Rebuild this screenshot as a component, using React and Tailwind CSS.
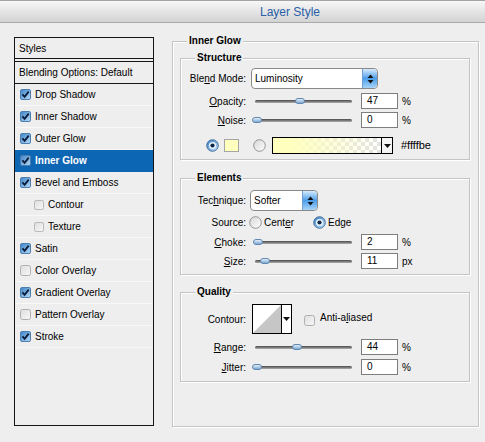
import React from "react";

function CheckBox({ checked, small }) {
  const s = small ? 10 : 11;
  if (checked) {
    return (
      <svg width={s} height={s} viewBox="0 0 11 11" className="shrink-0">
        <defs>
          <linearGradient id="cbOn" x1="0" y1="0" x2="1" y2="1">
            <stop offset="0" stopColor="#3a82c8" />
            <stop offset="1" stopColor="#b9dcf7" />
          </linearGradient>
        </defs>
        <rect x="0.5" y="0.5" width="10" height="10" rx="1.5" fill="url(#cbOn)" stroke="#4d7fae" />
        <path d="M2.4 5.3 L4.6 7.8 L8.7 2.6" stroke="#0b1f3d" strokeWidth="1.9" fill="none" />
      </svg>
    );
  }
  return (
    <svg width={s} height={s} viewBox="0 0 11 11" className="shrink-0">
      <defs>
        <linearGradient id="cbOff" x1="0" y1="0" x2="1" y2="1">
          <stop offset="0" stopColor="#dedede" />
          <stop offset="1" stopColor="#f8f8f8" />
        </linearGradient>
      </defs>
      <rect x="0.5" y="0.5" width="10" height="10" rx="2" fill="url(#cbOff)" stroke="#b0b0b0" />
    </svg>
  );
}

function Radio({ on }) {
  return (
    <svg width="13" height="13" viewBox="0 0 13 13" className="shrink-0">
      <defs>
        <linearGradient id="rOn" x1="0" y1="0" x2="1" y2="1">
          <stop offset="0" stopColor="#2f78c2" />
          <stop offset="1" stopColor="#c7e3fa" />
        </linearGradient>
        <linearGradient id="rOff" x1="0" y1="0" x2="1" y2="1">
          <stop offset="0" stopColor="#d6d6d6" />
          <stop offset="1" stopColor="#ffffff" />
        </linearGradient>
      </defs>
      {on ? (
        <>
          <circle cx="6.5" cy="6.5" r="5.8" fill="url(#rOn)" stroke="#3d6a98" strokeWidth="0.9" />
          <circle cx="6.5" cy="6.5" r="3.6" fill="#e9f4fd" />
          <circle cx="6.5" cy="6.5" r="2.1" fill="#0c2748" />
        </>
      ) : (
        <circle cx="6.5" cy="6.5" r="5.8" fill="url(#rOff)" stroke="#8a8a8a" strokeWidth="0.9" />
      )}
    </svg>
  );
}

function Slider({ center }) {
  return (
    <div className="relative w-[97px] h-[8px] flex items-center shrink-0">
      <div className="w-full h-[3px] rounded-full bg-gradient-to-b from-[#4a4a4a] via-[#7a7a7a] to-[#b0b0b0]" />
      <div
        className="absolute top-[1px] w-[10px] h-[6px] rounded-full border border-[#5f87b0] bg-gradient-to-b from-[#e3effa] to-[#7ea9d3]"
        style={{ left: center - 255 - 5 }}
      />
    </div>
  );
}

function NumBox({ v }) {
  return (
    <div className="w-[37px] h-[16px] bg-white border border-[#7d7d7d] pl-[5px] flex items-center shrink-0 leading-none">
      {v}
    </div>
  );
}

function AquaButton() {
  return (
    <div className="w-[15px] self-stretch rounded-r-[4px] bg-gradient-to-b from-[#d4eafc] via-[#4a9de9] to-[#a6d4f9] border-l border-[#6c9fcf] flex items-center justify-center">
      <svg width="7" height="10" viewBox="0 0 7 10">
        <path d="M3.5 0.5 L6.5 4 L0.5 4 Z" fill="#111" />
        <path d="M3.5 9.5 L6.5 6 L0.5 6 Z" fill="#111" />
      </svg>
    </div>
  );
}

function SmallArrow() {
  return (
    <svg width="7" height="4" viewBox="0 0 7 4">
      <path d="M0 0 L7 0 L3.5 4 Z" fill="#111" />
    </svg>
  );
}

function Group({ title, className, children }) {
  return (
    <div
      className={
        "relative border border-[#c4c4c4] shadow-[inset_1px_1px_0_#ffffff,1px_1px_0_#ffffff] " +
        (className || "")
      }
    >
      <span className="absolute -top-[7px] left-[14px] px-[2px] bg-[#eeeeee] font-bold leading-[12px]">
        {title}
      </span>
      {children}
    </div>
  );
}

function Label({ children, w = "w-[65px]" }) {
  return <div className={w + " text-right shrink-0 whitespace-nowrap"}>{children}</div>;
}

function SliderRow({ label, center, value, unit, className }) {
  return (
    <div className={"flex items-center h-[16px] " + (className || "")}>
      <Label>{label}</Label>
      <div className="ml-[9px]">
        <Slider center={center} />
      </div>
      <div className="ml-[9px]">
        <NumBox v={value} />
      </div>
      <div className="ml-[4px]">{unit}</div>
    </div>
  );
}

const items = [
  { t: "Drop Shadow", c: true },
  { t: "Inner Shadow", c: true },
  { t: "Outer Glow", c: true },
  { t: "Inner Glow", c: true, sel: true },
  { t: "Bevel and Emboss", c: true },
  { t: "Contour", c: false, indent: true },
  { t: "Texture", c: false, indent: true },
  { t: "Satin", c: true },
  { t: "Color Overlay", c: false },
  { t: "Gradient Overlay", c: true },
  { t: "Pattern Overlay", c: false },
  { t: "Stroke", c: true },
];

export default function App() {
  return (
    <div className="w-[485px] h-[442px] overflow-hidden bg-[#eeeeee] text-[10px] text-black font-['Liberation_Sans',Arial,sans-serif]">
      {/* Title bar */}
      <div className="h-[23px] border-t border-[#a3a3a3] border-b border-b-[#a9a9a9] bg-gradient-to-b from-[#f7f7f7] to-[#d3d3d3] flex items-center justify-center pl-[95px]">
        <span className="text-[12px] text-[#2a5ea8]">Layer Style</span>
      </div>

      <div className="flex pt-[14px] pl-[14px]">
        {/* Left list */}
        <div className="w-[140px] h-[389px] border border-[#151515] flex flex-col shrink-0">
          <div className="h-[21px] border-b border-[#151515] flex items-center pl-[4px]">Styles</div>
          <div className="h-[2px]" />
          <div className="h-[23px] border-t border-b border-[#151515] flex items-center pl-[4px]">
            Blending Options: Default
          </div>
          {items.map((it) => (
            <div
              key={it.t}
              className={
                "h-[22px] border-b flex items-center gap-[4px] " +
                (it.indent ? "pl-[19px] " : "pl-[5px] ") +
                (it.sel ? "bg-[#0d66b3] border-[#0d66b3] text-white font-bold" : "border-[#f8f8f8]")
              }
            >
              <CheckBox checked={it.c} small={it.indent} />
              <span>{it.t}</span>
            </div>
          ))}
        </div>

        {/* Right: Inner Glow group */}
        <Group title="Inner Glow" className="ml-[18px] mt-[4px] w-[307px] h-[386px] pl-[7px] pt-[16px]">
          {/* Structure */}
          <Group title="Structure" className="w-[290px] h-[102px] pt-[9px]">
            <div className="flex items-center h-[21px]">
              <Label>
                Ble<u>n</u>d Mode:
              </Label>
              <div className="ml-[5px] w-[127px] h-[21px] bg-white border border-[#8a8a8a] rounded-[4px] flex overflow-hidden">
                <div className="flex-1 flex items-center pl-[3px]">Luminosity</div>
                <AquaButton />
              </div>
            </div>
            <SliderRow
              className="mt-[4px]"
              label={
                <>
                  <u>O</u>pacity:
                </>
              }
              center={300}
              value="47"
              unit="%"
            />
            <SliderRow
              className="mt-[3px]"
              label={
                <>
                  <u>N</u>oise:
                </>
              }
              center={257}
              value="0"
              unit="%"
            />
            <div className="flex items-center h-[17px] mt-[9px] pl-[25px]">
              <Radio on />
              <div className="ml-[5px] w-[15px] h-[13px] bg-[#ffffbe] border border-[#a5a5a5]" />
              <div className="ml-[14px]">
                <Radio />
              </div>
              <div className="ml-[6px] w-[121px] h-[17px] border border-black flex bg-white">
                <div className="flex-1 [background-image:linear-gradient(to_right,#ffffbe,#ffffbe_15%,rgba(255,255,190,0)),repeating-conic-gradient(#e2e2e2_0_25%,#ffffff_0_50%)] [background-size:100%_100%,8px_8px]" />
                <div className="w-[11px] border-l border-black flex items-center justify-center bg-[#f4f4f4]">
                  <SmallArrow />
                </div>
              </div>
              <div className="ml-[8px] text-[11px]">#ffffbe</div>
            </div>
          </Group>

          {/* Elements */}
          <Group title="Elements" className="mt-[18px] w-[290px] h-[97px] pt-[11px]">
            <div className="flex items-center h-[21px]">
              <Label>
                Tec<u>h</u>nique:
              </Label>
              <div className="ml-[4px] w-[68px] h-[21px] bg-white border border-[#8a8a8a] rounded-[4px] flex overflow-hidden">
                <div className="flex-1 flex items-center pl-[3px]">Softer</div>
                <AquaButton />
              </div>
            </div>
            <div className="flex items-center h-[13px] mt-[5px]">
              <Label>Source:</Label>
              <div className="ml-[3px]">
                <Radio />
              </div>
              <span className="ml-[2px]">
                Cent<u>e</u>r
              </span>
              <div className="ml-[19px]">
                <Radio on />
              </div>
              <span className="ml-[2px]">
                Ed<u>g</u>e
              </span>
            </div>
            <SliderRow
              className="mt-[5px]"
              label={
                <>
                  <u>C</u>hoke:
                </>
              }
              center={258}
              value="2"
              unit="%"
            />
            <SliderRow
              className="mt-[3px]"
              label={
                <>
                  <u>S</u>ize:
                </>
              }
              center={265}
              value="11"
              unit="px"
            />
          </Group>

          {/* Quality */}
          <Group title="Quality" className="mt-[17px] w-[290px] h-[90px] pt-[11px]">
            <div className="flex items-center h-[30px]">
              <Label>Contour:</Label>
              <div className="ml-[6px] w-[40px] h-[30px] border border-black bg-white flex">
                <svg width="28" height="28" viewBox="0 0 28 28" className="shrink-0">
                  <path d="M0 28 L28 0 L28 28 Z" fill="#c6c6c6" />
                </svg>
                <div className="flex-1 border-l border-black flex items-center justify-center">
                  <SmallArrow />
                </div>
              </div>
              <div className="ml-[12px] flex items-start gap-[5px]">
                <div className="mt-[3px]">
                  <CheckBox />
                </div>
                <span className="leading-[12px]">
                  Anti-a<u>l</u>iased
                </span>
              </div>
            </div>
            <SliderRow
              className="mt-[5px]"
              label={
                <>
                  <u>R</u>ange:
                </>
              }
              center={297}
              value="44"
              unit="%"
            />
            <SliderRow
              className="mt-[4px]"
              label={
                <>
                  <u>J</u>itter:
                </>
              }
              center={257}
              value="0"
              unit="%"
            />
          </Group>
        </Group>
      </div>
    </div>
  );
}
